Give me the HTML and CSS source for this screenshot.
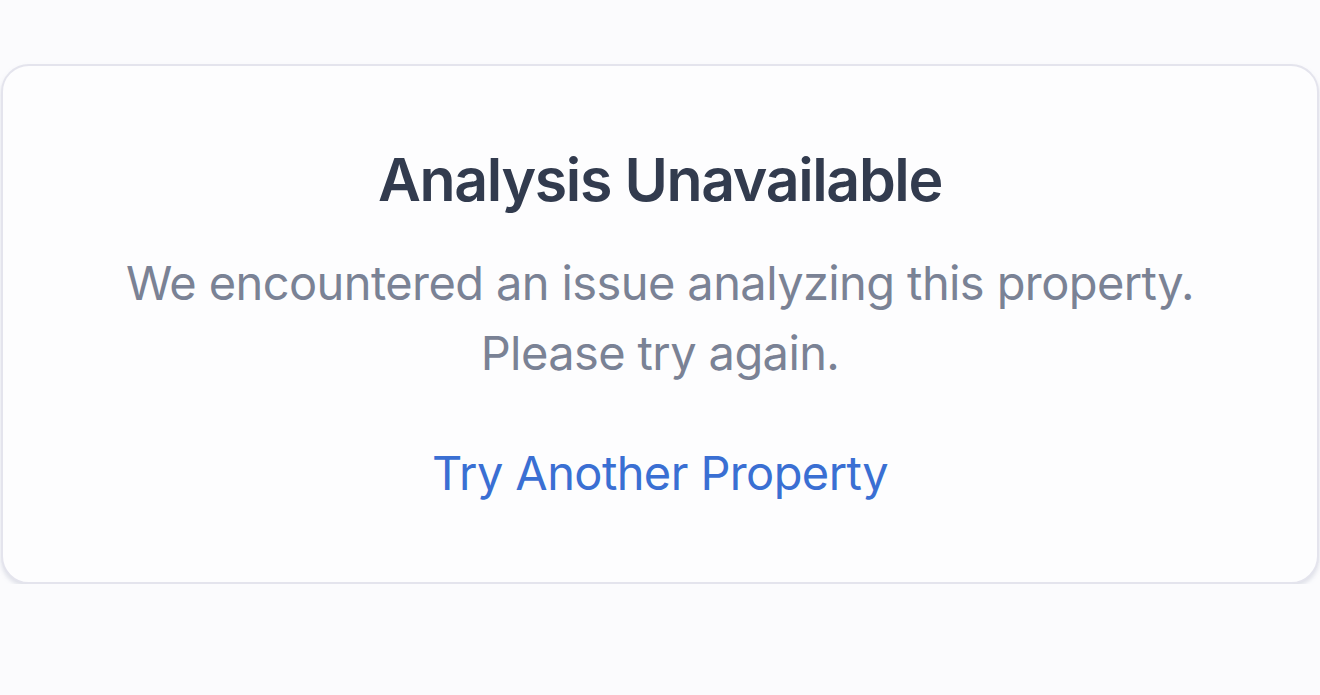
FILE: index.html
```html
<!DOCTYPE html>
<html>
<head>
<meta charset="utf-8">
<link rel="stylesheet" href="styles.css">
</head>
<body>
<div class="page">
  <div class="card">
    <h1 class="title">Analysis Unavailable</h1>
    <p class="message">We encountered an issue analyzing this property.<br>Please try again.</p>
    <a class="link" href="#">Try Another Property</a>
  </div>
</div>
</body>
</html>
```
FILE: styles.css
```css
html, body {
  margin: 0;
  padding: 0;
  background: #fbfbfd;
  font-family: Inter, "Noto Sans", sans-serif;
}
.page {
  padding: 64px 1px 0 1px;
}
.card {
  box-sizing: border-box;
  height: 520px;
  background: #fdfdfe;
  border: 2px solid #e4e4ed;
  border-radius: 28px;
  box-shadow: 0 3px 4px rgba(170, 175, 195, 0.35);
  display: flex;
  flex-direction: column;
  align-items: center;
  padding-top: 78px;
}
.title {
  margin: 0;
  font-size: 59px;
  font-weight: 600;
  letter-spacing: -1.35px;
  color: #323b4e;
  line-height: 72px;
}
.message {
  margin: 32px 0 0 0;
  font-size: 47px;
  letter-spacing: -0.6px;
  line-height: 70px;
  color: #7a8295;
  text-align: center;
}
.link {
  margin-top: 50px;
  font-size: 47px;
  letter-spacing: -0.6px;
  line-height: 70px;
  color: #3a6fd3;
  text-decoration: none;
}
```
